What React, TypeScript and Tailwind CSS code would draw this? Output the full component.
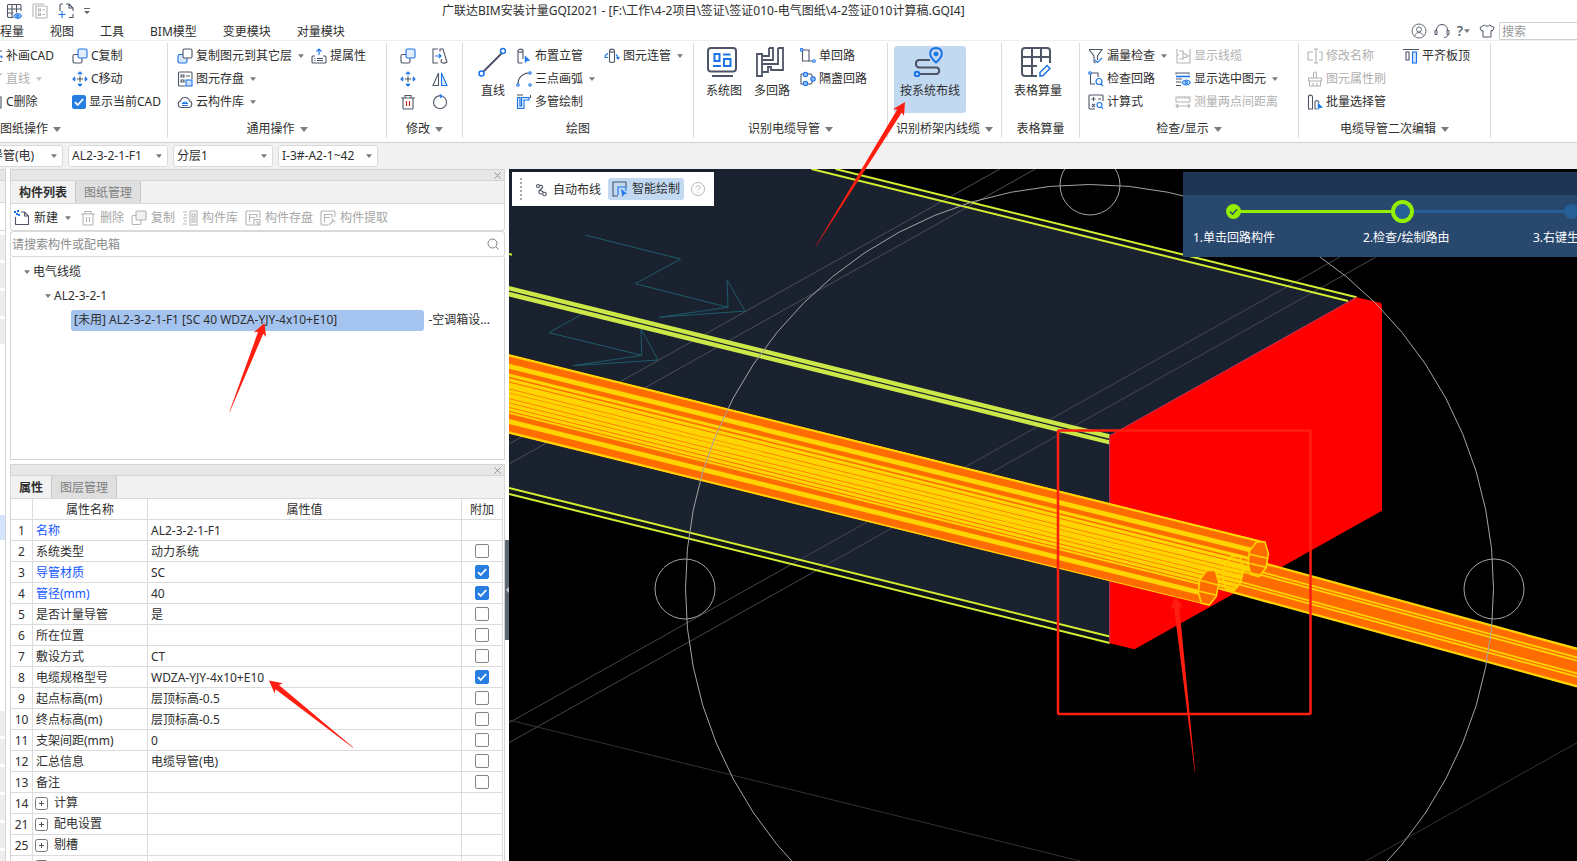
import { useState, type ReactNode } from "react";

const D = "#4d5566";
const B = "#1a73e8";
const G = "#b4b4b4";

/* ---------- small icons, drawn in a 16 x 16 box ---------- */

const moveIcon = (
  <>
    <path d="M8 5v6M5 8h6" stroke={D} />
    <path d="M8 4V1M6 3l2-2 2 2M8 12v3M6 13l2 2 2-2M4 8H1M3 6L1 8l2 2M12 8h3M13 6l2 2-2 2" stroke={B} />
  </>
);

const ICONS: Record<string, ReactNode> = {
  copy: (
    <>
      <rect x="1" y="6.5" width="9" height="8.5" rx="1.5" stroke={D} fill="#fff" />
      <rect x="6" y="1" width="9" height="9" rx="1.5" stroke={B} fill="#e3eefd" />
    </>
  ),
  copyLayer: (
    <>
      <rect x="1" y="6.5" width="9" height="8.5" rx="1.5" stroke={B} fill="#d3e4fb" />
      <rect x="6" y="1" width="9" height="9" rx="1.5" stroke={D} fill="#fff" />
    </>
  ),
  copyGray: (
    <>
      <rect x="1" y="5.5" width="9" height="9" rx="1.5" stroke={G} />
      <rect x="5" y="1" width="10" height="9" rx="1" stroke={G} fill="#f1f1f1" />
    </>
  ),
  move: moveIcon,
  patch: (
    <>
      <path d="M10 3h5M15 13.500h-5" stroke={D} />
      <path d="M11 10c4-4 5-1 3 0" stroke={B} />
    </>
  ),
  lineGray: <path d="M3 14L14 3h1" stroke={G} />,
  erase: <path d="M3 3h11v11H5" stroke={D} />,
  diskSave: (
    <>
      <path d="M8 15H2.500a1 1 0 0 1-1-1V2a1 1 0 0 1 1-1H14a1 1 0 0 1 1 1v6" stroke={D} />
      <path d="M4 4h3v2H4zM4 9h3v2H4zM9 5h4" stroke={D} />
      <rect x="9" y="9" width="6" height="6" stroke={B} fill="#cfe1fa" />
    </>
  ),
  cloud: (
    <>
      <path d="M4 13.500a3.300 3.300 0 0 1-.5-6.400 4.600 4.600 0 0 1 9 0 3.300 3.300 0 0 1-.5 6.400z" stroke={D} />
      <path d="M5 11.500h6M5.500 9.500c1-2 4-2 5 0z" stroke={B} />
    </>
  ),
  attr: (
    <>
      <path d="M4 8H2a1 1 0 0 0-1 1v5a1 1 0 0 0 1 1h12a1 1 0 0 0 1-1V9a1 1 0 0 0-1-1h-2M3.500 10.500h1M6 10.500h6M3.500 12.500h1M6 12.500h6" stroke={D} />
      <path d="M8 7V1M5.500 3.500L8 1l2.500 2.500" stroke={B} />
    </>
  ),
  stretch: (
    <>
      <path d="M6 1H1v14h5M8 3.500V1h3l4 13c-2 1.500-5 1.500-6 0l.5-3" stroke={D} />
      <path d="M3 8h6M7 6l2 2-2 2" stroke={B} />
    </>
  ),
  mirror: (
    <>
      <path d="M6.500 2v12.500H1z" stroke={D} />
      <path d="M9.500 2v12.500H15z" stroke={B} fill="#dbe9fd" />
    </>
  ),
  trash: (
    <>
      <path d="M1 4h14M3 4v10a1 1 0 0 0 1 1h8a1 1 0 0 0 1-1V4M5 4V1.500h6V4" stroke={D} />
      <path d="M6.500 7v5M9.500 7v5" stroke="#e02020" />
    </>
  ),
  trashGray: <path d="M1 4h14M3 4v10a1 1 0 0 0 1 1h8a1 1 0 0 0 1-1V4M5 4V1.500h6V4M6.500 7v5M9.500 7v5" stroke={G} />,
  rotate: (
    <>
      <path d="M10.500 2.200a6.500 6.500 0 1 1-4-.3L9 1.800" stroke={D} />
      <path d="M8 .5l2.500 1.500L8.500 4z" fill={B} stroke={B} strokeWidth="0.800" />
    </>
  ),
  riser: (
    <>
      <path d="M2 3v11a1 1 0 0 0 1 1h3.500M2 3c0-2.500 5-2.500 5 0v8M2 3c0 1.500 5 1.500 5 0" stroke={D} />
      <path d="M9 8l5 4.500-3 .2-2 2z" fill={B} stroke={B} strokeWidth="0.500" />
    </>
  ),
  arc: (
    <>
      <path d="M2 13C2 7 6 2.500 12.500 2" stroke={D} />
      <circle cx="2" cy="14" r="1.200" stroke={B} />
      <circle cx="14" cy="2" r="1.200" stroke={B} />
      <circle cx="14" cy="14" r="1.200" stroke={B} />
    </>
  ),
  multi: (
    <>
      <path d="M1 1h6M14.500 1v3" stroke={D} />
      <path d="M1.500 3.500v11H8V6h5V3.500H5.500V12H4V3.500z" stroke={B} fill="#dbe9fd" />
    </>
  ),
  link: (
    <>
      <path d="M5.500 3v10c0 2 5 2 5 0V3c0-2.500-5-2.500-5 0zM5.500 3c0 1.500 5 1.500 5 0" stroke={D} />
      <path d="M4 5.500C2 6 1 8 1 9.500h3M12 6.500c1.500 1 2 2.500 2 4M12.500 9l1.500 2 1.500-2" stroke={B} />
    </>
  ),
  single: (
    <>
      <path d="M3 2h6v11h4" stroke={D} />
      <path d="M2.500 3v10H9" stroke={D} />
      <circle cx="1.500" cy="1.800" r="1.300" stroke={B} fill="#fff" />
      <circle cx="14" cy="13" r="1.300" stroke={B} fill="#fff" />
    </>
  ),
  skip: (
    <>
      <path d="M1 3v10h3M1 3h3M7 3h4l3 5-3 5H6" stroke={D} />
      <circle cx="5.500" cy="3.500" r="2.200" stroke={B} fill="#8fbcf5" />
      <circle cx="5.500" cy="12.500" r="2.200" stroke={B} fill="#8fbcf5" />
      <circle cx="13" cy="8" r="2.200" stroke={B} fill="#8fbcf5" />
    </>
  ),
  funnel: (
    <>
      <path d="M1 1.500h13L9.500 8v4M1 1.500L6 8v6l1.500 1" stroke={D} />
      <path d="M7 12l2.500 2.500L14 10" stroke={B} />
    </>
  ),
  checkLoop: (
    <>
      <path d="M2 2h8v4M2.500 3v10H7" stroke={D} />
      <circle cx="2" cy="2" r="1.300" stroke={B} fill="#fff" />
      <circle cx="11" cy="10.500" r="3" stroke={B} />
      <path d="M13 13l2 2" stroke={B} />
    </>
  ),
  formula: (
    <>
      <path d="M7 15H2a1 1 0 0 1-1-1V2a1 1 0 0 1 1-1h12a1 1 0 0 1 1 1v5M3.500 5h4M5.500 3v4M10 5h3M4 10l3 3M7 10l-3 3" stroke={D} />
      <circle cx="11.500" cy="11" r="2.500" stroke={B} />
      <path d="M13.500 13l1.500 2" stroke={B} />
    </>
  ),
  cableGray: <path d="M2 1v14h13V1M4 3h4v8H4M8 5l4 2v2l-4 1M12 8h3M2 7h2" stroke={G} />,
  showSel: (
    <>
      <path d="M1 3.500V2h13v1.500M1 8h6M1 11h5M1 14.500h5" stroke={D} />
      <path d="M1 5.500h14" stroke={B} strokeWidth="1.600" />
      <path d="M7 11.500c2-3.300 6.500-3.300 8.500 0-2 3.300-6.500 3.300-8.500 0z" stroke={B} fill="#dbe9fd" />
      <circle cx="11.200" cy="11.500" r="1.200" stroke={B} />
    </>
  ),
  ruler: <path d="M1 3h14v5H1zM4 3v2M7 3v2M10 3v2M13 3v2M1 12h14M3 10l-2 2 2 2M13 10l2 2-2 2" stroke={G} />,
  rename: <path d="M6 4H1v8h5M12 4h3v8h-3M9 1v14M7 1h4M7 15h4" stroke={G} />,
  brush: <path d="M6.500 7V2.500a1.500 1.500 0 0 1 3 0V7M1.500 7h13v3h-13zM2.500 10v5h11v-5M6 12v3M10 12v3" stroke={G} />,
  batch: (
    <>
      <path d="M1.500 3v12h4V3c0-2.500-4-2.500-4 0zM8 15V8c0-2 4-2 4 1M8 15h2" stroke={D} />
      <path d="M11 9l4.500 4.500-2.800.2L11 15.500z" fill={B} stroke={B} strokeWidth="0.500" />
    </>
  ),
  alignTop: (
    <>
      <path d="M0 1.500h16M3 4h3v8H3z" stroke={D} />
      <rect x="9.500" y="4" width="4" height="11" stroke={B} fill="#cfe1fa" />
    </>
  ),
  newDoc: (
    <>
      <path d="M1.500 7v7.500h13V6l-4-4H7M10.500 2v4h4" stroke={D} />
      <path d="M0 1h2v2H0zM3 0h2v2H3zM2 3h2v2H2zM4 4h2v2H4z" fill={B} stroke="none" />
    </>
  ),
  library: <path d="M8 1h7v14H8V1M10 4h3v3h-3zM10 9h3v3h-3zM1 2h4M1 8h4M1 14h4M2 5h3M2 11h3" stroke={G} />,
  store: (
    <>
      <path d="M8 15H2a1 1 0 0 1-1-1V2a1 1 0 0 1 1-1h12a1 1 0 0 1 1 1v6M4.500 12V4.500H12v3M4.500 7.500H10" stroke={G} />
      <path d="M9 9.500h6V15H9zM11 12h2v3" stroke={G} />
    </>
  ),
  extract: <path d="M8 15H2a1 1 0 0 1-1-1V2a1 1 0 0 1 1-1h12a1 1 0 0 1 1 1v5M4.500 12V4.500H12v3M4.500 7.500H10M9 15l4-4M12 9l3 3" stroke={G} />,
  gridEye: (
    <>
      <path d="M7.500 14.500H2.500a1.500 1.500 0 0 1-1-1.500V2.500a1.500 1.500 0 0 1 1-1h11.500a1 1 0 0 1 1 1V8M1.500 6h13.500M1.500 10h6M6 1.500v13M10.500 1.500v8" stroke={D} />
      <path d="M8 13c2-3.200 5.500-3.200 7.500 0-2 3.200-5.500 3.200-7.500 0z" stroke={B} fill="#dbe9fd" />
      <circle cx="11.700" cy="13" r="1" stroke={B} />
    </>
  ),
  listGray: <path d="M12 1H2a1 1 0 0 0-1 1v12M4 3h10a1 1 0 0 1 1 1v10a1 1 0 0 1-1 1H4zM6.500 6h2v2h-2zM6.500 10.500h2v2h-2zM10.500 7H13M10.500 11.500H13" stroke={G} />,
  addFrame: (
    <>
      <path d="M2 8V2a1 1 0 0 1 1-1h2M8 1h3l4 4v3M15 11v3.500h-4M11 1v4h4" stroke={D} />
      <path d="M4 8v7M0.500 11.500h7" stroke={B} />
    </>
  ),
  autoWire: (
    <>
      <circle cx="5" cy="4" r="1.500" stroke={D} />
      <circle cx="11.500" cy="12" r="1.800" stroke={D} />
      <path d="M6.500 3.500c3-.5 4 1 2.500 2.500L6.500 8.500C5 10 6 12.500 9.500 12M7 8l3.500 2" stroke={D} />
    </>
  ),
  smartDraw: (
    <>
      <path d="M14 6V1H1v14h5" stroke={D} />
      <path d="M6 14V6h8v4" stroke={B} />
      <path d="M9.500 8.500l5 4-2.500.5-1.500 2.500z" fill={B} stroke={B} strokeWidth="0.500" />
    </>
  ),
};

function Icon({ name }: { name: string }) {
  return (
    <svg viewBox="0 0 16 16" className="size-4 shrink-0" fill="none" strokeWidth="1.100" aria-hidden="true">
      {ICONS[name]}
    </svg>
  );
}

function Caret({ muted = false, big = false }: { muted?: boolean; big?: boolean }) {
  return (
    <svg viewBox="0 0 8 5" className={big ? "h-[5px] w-2 shrink-0" : "h-1 w-[6px] shrink-0"} aria-hidden="true">
      <path d="M0 0h8L4 5z" fill={muted ? "#c4c4c4" : "#7b7b7b"} />
    </svg>
  );
}

function Check({ label, defaultChecked = false, text }: { label: string; defaultChecked?: boolean; text?: string }) {
  const [on, setOn] = useState(defaultChecked);
  return (
    <label className="inline-flex items-center gap-[3px]">
      <span className="grid size-[14px]">
        <input
          type="checkbox"
          checked={on}
          onChange={(e) => setOn(e.target.checked)}
          aria-label={label}
          className="peer col-start-1 row-start-1 size-[14px] appearance-none rounded-[2px] border border-[#858585] bg-white checked:border-[#287de1] checked:bg-[#287de1]"
        />
        <svg viewBox="0 0 14 14" className="pointer-events-none invisible col-start-1 row-start-1 size-[14px] peer-checked:visible" aria-hidden="true">
          <path d="M3 7.200l2.700 2.800L11.200 4" fill="none" stroke="#fff" strokeWidth="1.800" />
        </svg>
      </span>
      {text}
    </label>
  );
}

/* ---------- ribbon ---------- */

function Tool({ icon, text, caret, off }: { icon: string; text?: string; caret?: boolean; off?: boolean }) {
  return (
    <button
      type="button"
      aria-label={text ?? icon}
      className={
        off
          ? "flex h-[23px] items-center gap-[3px] whitespace-nowrap text-[#b0b0b0]"
          : "flex h-[23px] items-center gap-[3px] whitespace-nowrap"
      }
    >
      <Icon name={icon} />
      {text}
      {caret && (
        <span className="ml-[3px] flex">
          <Caret muted={off} />
        </span>
      )}
    </button>
  );
}

function BigTool({ text, active, children }: { text: string; active?: boolean; children: ReactNode }) {
  return (
    <button
      type="button"
      className={
        active
          ? "mt-[2px] flex h-[67px] flex-col items-center gap-[6px] rounded-[3px] bg-[#c2d9f2] px-[6px] pt-px whitespace-nowrap"
          : "mt-[2px] flex h-[67px] flex-col items-center gap-[6px] pt-px whitespace-nowrap"
      }
    >
      <svg viewBox="0 0 30 30" className="mr-1 size-[30px]" fill="none" strokeWidth="2" stroke={D} aria-hidden="true">
        {children}
      </svg>
      {text}
    </button>
  );
}

function Group({ width, label, caret, start, children }: { width: string; label: string; caret?: boolean; start?: boolean; children: ReactNode }) {
  return (
    <section className={`flex h-[95px] shrink-0 flex-col justify-between border-r border-[#dcdcdc] pt-px ${width}`}>
      <div className="flex">{children}</div>
      <div className={start ? "flex h-[18px] items-center gap-[5px]" : "flex h-[18px] items-center justify-center gap-[5px]"}>
        {label}
        {caret && <Caret big />}
      </div>
    </section>
  );
}

function Ribbon() {
  return (
    <div className="flex h-[102px] shrink-0 overflow-hidden border-b border-[#d0d0d0] bg-white pt-[2px]">
      <Group width="w-[168px]" label="图纸操作" caret start>
        <div className="-ml-[13px] w-[85px]">
          <Tool icon="patch" text="补画CAD" />
          <Tool icon="lineGray" text="直线" caret off />
          <Tool icon="erase" text="C删除" />
        </div>
        <div>
          <Tool icon="copy" text="C复制" />
          <Tool icon="move" text="C移动" />
          <div className="flex h-[23px] items-center whitespace-nowrap">
            <Check label="显示当前CAD" text="显示当前CAD" defaultChecked />
          </div>
        </div>
      </Group>
      <Group width="w-[219px]" label="通用操作" caret>
        <div className="ml-[9px] w-[134px]">
          <Tool icon="copyLayer" text="复制图元到其它层" caret />
          <Tool icon="diskSave" text="图元存盘" caret />
          <Tool icon="cloud" text="云构件库" caret />
        </div>
        <div>
          <Tool icon="attr" text="提属性" />
        </div>
      </Group>
      <Group width="w-[76px]" label="修改" caret>
        <div className="ml-[13px] w-8">
          <Tool icon="copy" />
          <Tool icon="move" />
          <Tool icon="trash" />
        </div>
        <div>
          <Tool icon="stretch" />
          <Tool icon="mirror" />
          <Tool icon="rotate" />
        </div>
      </Group>
      <Group width="w-[231px]" label="绘图">
        <div className="ml-[13px] w-10">
          <BigTool text="直线">
            <path d="M6 26L27 5" />
            <circle cx="5.500" cy="26.500" r="2.500" stroke={B} strokeWidth="1.500" fill="#fff" />
            <circle cx="27" cy="4" r="2.500" stroke={B} strokeWidth="1.500" fill="#fff" />
          </BigTool>
        </div>
        <div className="w-[88px]">
          <Tool icon="riser" text="布置立管" />
          <Tool icon="arc" text="三点画弧" caret />
          <Tool icon="multi" text="多管绘制" />
        </div>
        <div>
          <Tool icon="link" text="图元连管" caret />
        </div>
      </Group>
      <Group width="w-[194px]" label="识别电缆导管" caret>
        <div className="ml-3 flex w-[94px] gap-3">
          <BigTool text="系统图">
            <rect x="1" y="1" width="28" height="23.500" rx="3" />
            <path d="M5 29h21" />
            <path d="M7.500 7h5v7h-5zM16 7.500h7.500M17 12h6.500v7H17zM6 19h8" stroke={B} />
          </BigTool>
          <BigTool text="多回路">
            <path strokeWidth="1.800" d="M2 7h5v22H2zM14 1h4v12H7M7 9h7V1M23 1v16H7M23 1h5v22H16v-3h-3v5H7" />
          </BigTool>
        </div>
        <div>
          <Tool icon="single" text="单回路" />
          <Tool icon="skip" text="隔盏回路" />
        </div>
      </Group>
      <Group width="w-[114px]" label="识别桥架内线缆" caret>
        <div className="ml-[6px]">
          <BigTool text="按系统布线" active>
            <path d="M17 13H5.500a4 4 0 0 0 0 7.500H24a3.500 3.500 0 0 1 0 6.500H6" />
            <path d="M23 15.500c-8.500-7-7-14 0-14.500 7 .5 8.500 7.500 0 14.500z" stroke={B} />
            <circle cx="23" cy="7" r="2" stroke={B} fill="#1a73e8" strokeWidth="1" />
            <circle cx="4" cy="27" r="2.300" stroke={B} fill="#c2d9f2" />
          </BigTool>
        </div>
      </Group>
      <Group width="w-[78px]" label="表格算量">
        <div className="ml-3">
          <BigTool text="表格算量">
            <path d="M16 29H4a3 3 0 0 1-3-3V4a3 3 0 0 1 3-3h22a3 3 0 0 1 3 3v12M1 10h28M1 19h15M11 1v28M20 1v14" />
            <path d="M19 29v-3.500l7-7 3 3-7 7z" stroke={B} strokeWidth="1.500" />
          </BigTool>
        </div>
      </Group>
      <Group width="w-[219px]" label="检查/显示" caret>
        <div className="ml-2 w-[87px]">
          <Tool icon="funnel" text="漏量检查" caret />
          <Tool icon="checkLoop" text="检查回路" />
          <Tool icon="formula" text="计算式" />
        </div>
        <div>
          <Tool icon="cableGray" text="显示线缆" off />
          <Tool icon="showSel" text="显示选中图元" caret />
          <Tool icon="ruler" text="测量两点间距离" off />
        </div>
      </Group>
      <Group width="w-[192px]" label="电缆导管二次编辑" caret>
        <div className="ml-2 w-24">
          <Tool icon="rename" text="修改名称" off />
          <Tool icon="brush" text="图元属性刷" off />
          <Tool icon="batch" text="批量选择管" />
        </div>
        <div>
          <Tool icon="alignTop" text="平齐板顶" />
        </div>
      </Group>
    </div>
  );
}

function Header() {
  return (
    <header className="shrink-0 bg-white">
      <div className="flex h-[21px] items-center overflow-hidden whitespace-nowrap">
        <div className="flex w-[442px] shrink-0 items-center gap-[10px] pl-[6px]">
          <button type="button" aria-label="表格预览"><Icon name="gridEye" /></button>
          <button type="button" aria-label="列表"><Icon name="listGray" /></button>
          <button type="button" aria-label="新增图框"><Icon name="addFrame" /></button>
          <button type="button" aria-label="更多">
            <svg viewBox="0 0 6 6" className="size-[6px]"><path d="M0 0h6v1H0zM0 3h6L3 6z" fill="#666" /></svg>
          </button>
        </div>
        <h1>广联达BIM安装计量GQI2021 - [F:\工作\4-2项目\签证\签证010-电气图纸\4-2签证010计算稿.GQI4]</h1>
      </div>
      <div className="flex h-5 items-center border-b border-[#efefef]">
        <nav className="-ml-3 flex gap-[26px] pt-[2px] whitespace-nowrap">
          {["工程量", "视图", "工具", "BIM模型", "变更模块", "对量模块"].map((t) => (
            <button type="button" key={t}>{t}</button>
          ))}
        </nav>
        <div className="ml-auto flex items-center">
          <button type="button" aria-label="用户" className="mr-[7px]">
            <svg viewBox="0 0 16 16" className="size-4" fill="none" stroke="#666c78">
              <circle cx="8" cy="8" r="7" /><circle cx="8" cy="6.500" r="2.500" /><path d="M4 12.500c1-4 7-4 8 0" />
            </svg>
          </button>
          <button type="button" aria-label="客服" className="mr-[7px]">
            <svg viewBox="0 0 16 16" className="size-4" fill="none" stroke={D}>
              <path d="M2.500 7a5.500 5.500 0 0 1 11 0M1 7.500h2v4H1zM13 7.500h2v4h-2zM14 11.500c0 2-2 3-4 3" />
            </svg>
          </button>
          <button type="button" aria-label="帮助" className="mr-[9px] flex items-center gap-px text-sm leading-4 font-medium text-[#4d5566]">
            ?<Caret />
          </button>
          <button type="button" aria-label="皮肤" className="mr-1">
            <svg viewBox="0 0 16 16" className="size-4" fill="none" stroke={D}>
              <path d="M5.500 2L1 4.500 2.500 8l1.500-.5V14h8V7.500l1.500.5L15 4.500 10.500 2c-1 1.500-4 1.500-5 0z" />
            </svg>
          </button>
          <input
            type="text"
            aria-label="搜索"
            placeholder="搜索"
            className="h-[18px] w-[78px] rounded-l-[2px] border border-r-0 border-[#d0d0d0] pt-px pl-[2px] outline-none placeholder:text-[#999]"
          />
        </div>
      </div>
    </header>
  );
}

function Combo({ label, value, className = "" }: { label: string; value: string; className?: string }) {
  return (
    <label className={`relative flex h-[22px] w-[100px] shrink-0 items-center rounded-[3px] border border-[#dadada] bg-white ${className}`}>
      <select aria-label={label} defaultValue={value} className="w-full appearance-none bg-transparent pl-[3px] text-xs outline-none">
        <option>{value}</option>
      </select>
      <span className="pointer-events-none absolute top-2 right-[5px] flex"><Caret /></span>
    </label>
  );
}

/* ---------- left panels ---------- */

function PanelTitle() {
  return (
    <div className="flex h-3 shrink-0 items-center justify-end border border-[#d4d4d4] bg-[#e7e7e7] pr-[3px]">
      <button type="button" aria-label="关闭">
        <svg viewBox="0 0 7 7" className="size-[7px]"><path d="M.5.5l6 6M6.500.5l-6 6" stroke="#909090" fill="none" /></svg>
      </button>
    </div>
  );
}

function Tabs({ active, other }: { active: string; other: string }) {
  return (
    <div className="flex h-[23px] shrink-0 border-x border-b border-[#d9d9d9] bg-[#f1f1f1]">
      <button type="button" className="border-r border-[#c6c6c6] px-2 pt-[2px] font-bold">{active}</button>
      <button type="button" className="border-r border-[#c6c6c6] bg-[#dfdfdf] px-2 pt-[2px] text-[#808080]">{other}</button>
    </div>
  );
}

function PanelTool({ icon, text }: { icon: string; text: string }) {
  return (
    <button type="button" className="flex items-center gap-1 text-[#a6a6a6]">
      <Icon name={icon} />
      {text}
    </button>
  );
}

function ComponentPanel() {
  return (
    <section className="flex shrink-0 flex-col">
      <PanelTitle />
      <Tabs active="构件列表" other="图纸管理" />
      <div className="flex h-[27px] items-center gap-[7px] rounded-b-[3px] border border-t-0 border-[#d9d9d9] pt-[2px] pl-[3px] whitespace-nowrap">
        <button type="button" className="mr-[2px] flex items-center gap-1">
          <Icon name="newDoc" />
          新建
          <span className="ml-[3px] flex"><Caret /></span>
        </button>
        <PanelTool icon="trashGray" text="删除" />
        <PanelTool icon="copyGray" text="复制" />
        <PanelTool icon="library" text="构件库" />
        <PanelTool icon="store" text="构件存盘" />
        <PanelTool icon="extract" text="构件提取" />
      </div>
      <label className="flex h-[26px] items-center rounded-[3px] border border-[#d9d9d9] pr-[5px] pl-px">
        <input type="text" aria-label="搜索构件" placeholder="请搜索构件或配电箱" className="min-w-0 flex-1 pt-[2px] outline-none placeholder:text-[#8c8c8c]" />
        <svg viewBox="0 0 12 12" className="size-3" fill="none" stroke="#7d7d7d"><circle cx="5.500" cy="5.500" r="4.500" /><path d="M9 9l2.500 2.500" /></svg>
      </label>
      <ul className="h-[203px] border border-t-0 border-[#d4d4d4] pt-[3px] whitespace-nowrap">
        <li className="flex h-6 items-center gap-[3px] pl-[13px]"><Caret />电气线缆</li>
        <li className="flex h-6 items-center gap-[3px] pl-[34px]"><Caret />AL2-3-2-1</li>
        <li className="flex h-6 items-center gap-1 pr-[14px] pl-[60px]">
          <span className="h-[21px] flex-1 rounded-[3px] bg-[#a4c3ee] pl-[3px] leading-5">[未用] AL2-3-2-1-F1 [SC 40 WDZA-YJY-4x10+E10]</span>
          <span>-空调箱设...</span>
        </li>
      </ul>
    </section>
  );
}

type Row = { n: string; name: string; value?: string; blue?: boolean; check?: boolean; group?: boolean };

const ROWS: Row[] = [
  { n: "1", name: "名称", value: "AL2-3-2-1-F1", blue: true },
  { n: "2", name: "系统类型", value: "动力系统", check: false },
  { n: "3", name: "导管材质", value: "SC", blue: true, check: true },
  { n: "4", name: "管径(mm)", value: "40", blue: true, check: true },
  { n: "5", name: "是否计量导管", value: "是", check: false },
  { n: "6", name: "所在位置", check: false },
  { n: "7", name: "敷设方式", value: "CT", check: false },
  { n: "8", name: "电缆规格型号", value: "WDZA-YJY-4x10+E10", check: true },
  { n: "9", name: "起点标高(m)", value: "层顶标高-0.5", check: false },
  { n: "10", name: "终点标高(m)", value: "层顶标高-0.5", check: false },
  { n: "11", name: "支架间距(mm)", value: "0", check: false },
  { n: "12", name: "汇总信息", value: "电缆导管(电)", check: false },
  { n: "13", name: "备注", check: false },
  { n: "14", name: "计算", group: true },
  { n: "21", name: "配电设置", group: true },
  { n: "25", name: "剔槽", group: true },
  { n: "", name: "", group: true },
];

function PropertyPanel() {
  const base = "h-[21px] border-r border-b border-[#dcdcdc] p-0 font-normal";
  const cell = `${base} pt-[2px]`;
  return (
    <section className="mt-1 flex min-h-0 flex-1 flex-col overflow-hidden">
      <PanelTitle />
      <Tabs active="属性" other="图层管理" />
      <div className="min-h-0 flex-1 overflow-hidden border-x border-[#d4d4d4] pr-px">
        <table className="w-full table-fixed border-separate border-spacing-0 whitespace-nowrap">
          <colgroup>
            <col className="w-[22px]" />
            <col className="w-[115px]" />
            <col />
            <col className="w-[41px]" />
          </colgroup>
          <thead>
            <tr>
              <th className={cell}></th>
              <th className={cell}>属性名称</th>
              <th className={cell}>属性值</th>
              <th className={cell}>附加</th>
            </tr>
          </thead>
          <tbody>
            {ROWS.map((r) => (
              <tr key={r.n + r.name}>
                <td className={`${cell} text-center`}>{r.n}</td>
                <td className={r.blue ? `${cell} text-[#1558ff]` : r.group ? base : cell}>
                  <div className="flex items-center pl-[3px]">
                    {r.group && (
                      <button type="button" aria-label={`展开${r.name}`} className="mr-[6px] -ml-px">
                        <svg viewBox="0 0 13 13" className="size-[13px]" fill="none" stroke="#777">
                          <rect x=".5" y=".5" width="12" height="12" rx="2" />
                          <path d="M4 6.500h5M6.500 4v5" stroke="#555" />
                        </svg>
                      </button>
                    )}
                    {r.name}
                  </div>
                </td>
                <td className={`${cell} overflow-hidden`}><span className="pl-[3px]">{r.value}</span></td>
                <td className={base}>
                  {r.check !== undefined && (
                    <div className="flex justify-center"><Check label={`附加 ${r.name}`} defaultChecked={r.check} /></div>
                  )}
                </td>
              </tr>
            ))}
          </tbody>
        </table>
      </div>
    </section>
  );
}

function SideStrip() {
  return (
    <aside className="flex w-[6px] shrink-0 flex-col overflow-hidden border-r border-[#d4d4d4]">
      <div className="h-3 shrink-0 border-y border-[#d4d4d4] bg-[#e7e7e7]" />
      <div className="h-[22px] shrink-0 border-b border-[#d9d9d9] bg-[#f1f1f1]" />
      <div className="mb-1 h-7 shrink-0 border-b border-[#d9d9d9]" />
      <div className="flex shrink-0 flex-col gap-[3px]">
        {[0, 1, 2, 3].map((i) => <div key={i} className="h-[25px] bg-[#ededed]" />)}
      </div>
      <div className="mt-[171px] mb-[171px] h-[25px] shrink-0 bg-[#d3e5fd]" />
      <div className="flex flex-col gap-[3px]">
        {[0, 1, 2, 3, 4, 5].map((i) => <div key={i} className="h-[25px] shrink-0 bg-[#ededed]" />)}
      </div>
    </aside>
  );
}

/* ---------- 3D view ---------- */

const LIME = "#d4ee34";
const YEL = "#ffd400";
const ORG = "#ff6d00";

/* [offset from the bundle's top edge, thickness] */
const BUNDLE: [number, number][] = [
  [0, 2.4], [9.7, 5], [19.5, 3.2], [24.3, 3.2], [28.5, 6], [35.2, 3.6], [39.3, 5], [45, 3.6], [49.3, 3.6], [53.8, 3], [57.8, 2], [65, 5], [77.3, 2.4],
];

const CAP: [number, number][] = [[-2, -17], [6.5, -17], [10, -5], [7.5, 9], [0.5, 17.5], [-7.5, 15.5], [-10.5, 5], [-9, -8]];

function ringPoints(cx: number, cy: number, r: number, n: number) {
  return Array.from({ length: n }, (_, i) => {
    const a = (i / n) * Math.PI * 2;
    return `${(cx + r * Math.cos(a)).toFixed(1)},${(cy + r * Math.sin(a)).toFixed(1)}`;
  }).join(" ");
}

function capPoints(cx: number, cy: number) {
  return CAP.map(([x, y]) => `${cx + x},${cy + y}`).join(" ");
}

function Scene() {
  return (
    <svg viewBox="509 169 1068 692" preserveAspectRatio="xMinYMin slice" className="absolute inset-0 size-full" fill="none" aria-label="三维视图">
      <defs>
        <clipPath id="bundle">
          <path d="M509 354L1265 541.500 1268.700 554 1266 568 1259 577 1244 573 1240.500 583 1233.500 591 1219 587 1216 597 1209 605.500 509 434z" />
        </clipPath>
      </defs>
      <rect x="509" y="169" width="1068" height="692" fill="#000" />
      <path d="M509 169H835.600L1356.600 297.300 1109.700 435.700V643L509 494z" fill="#1b222f" />
      <path d="M811.500 169H835.600L1356.600 297.300 1348 301z" fill="#10151a" />
      <path d="M509 488L1109.700 637V643L509 494z" fill="#10151a" />

      <g stroke="#4b4f58">
        <path d="M999.800 169L509 444M1035.300 169L509 464" />
        <path d="M1340 257L509 722.700M1375.500 257.300L509 742.700" stroke="#44474d" />
        <path d="M509 720L1080 861M1577 742.700L1366 861" stroke="#333" />
      </g>
      <g stroke="#1d5b6a">
        <path d="M584.900 235L680.600 259 635.200 283.700 728 307.300 727 280 745 311 659.300 317.300 728 307.300" />
        <path d="M583.500 313.300L549 332.700 641.700 355.300 641 329 658 360 573.200 365.700 641.700 355.300" />
      </g>

      <g stroke={LIME} strokeWidth="2">
        <path d="M835.600 169L1356.600 297.300M811.500 169L1348 301M509 488L1109.700 636.500M509 494L1109.700 643M509 254l3 .7" />
      </g>
      <path d="M509 286L1109.700 434.300V444.500L509 296.500z" fill="#cce748" />
      <path d="M509 291.200L1109.700 439.500" stroke="#1b222f" strokeWidth="1.300" />

      <path d="M1356.600 297.300L1381 303 1382 306V510.700L1134.500 649.300 1109.700 643.300V435.700z" fill="#f00" />
      <path d="M1109.700 643V435.700L1356.600 297.300" stroke="#c4385a" />

      <path d="M1219 551L1577 648.500V687L1219 589z" fill={ORG} />
      <g stroke={YEL} strokeWidth="2.300">
        <path d="M1219 551L1577 648.800M1219 588.500L1577 686.300" />
        <g strokeWidth="1.700">
          <path d="M1219 560.500L1577 657.500M1219 563.500L1577 660.700M1219 576L1577 673.500M1219 579L1577 676.700" />
        </g>
      </g>

      <g clipPath="url(#bundle)">
        <path d="M509 354L1280 545V625L509 434z" fill={ORG} />
        {BUNDLE.map(([o, t]) => (
          <path key={o} d={`M509 ${354 + o}L1280 ${545 + o}v${t}L509 ${354 + o + t}z`} fill={YEL} />
        ))}
      </g>
      <g stroke={YEL} strokeWidth="1.600">
        <polygon points={capPoints(1258.5, 559)} fill={ORG} />
        <path d="M1249 554l19 4.500M1248 563l19 4.500M1251 573l11 2.500" />
        <polygon points={capPoints(1233.3, 573.5)} />
        <path d="M1224 567l22 5M1222 574l20 5M1226 584l12 3" />
        <polygon points={capPoints(1208.8, 587.5)} fill={ORG} />
        <path d="M1199 580l19 5M1198 591l18 4" />
      </g>

      <g stroke="#a3a3a3">
        <polygon points={ringPoints(1089.500, 588.500, 404, 64)} />
        <polygon points={ringPoints(685, 589, 30, 32)} />
        <polygon points={ringPoints(1090, 185, 30, 32)} />
        <polygon points={ringPoints(1494, 589, 30, 32)} />
      </g>
    </svg>
  );
}

function DrawBar() {
  return (
    <div className="absolute top-[3px] left-[3px] flex h-[34px] w-[202px] items-center bg-white pl-2 whitespace-nowrap">
      <span className="h-[22px] border-l-2 border-dotted border-[#a8a8a8]" />
      <button type="button" className="ml-[11px] flex items-center gap-1 pt-px">
        <Icon name="autoWire" />
        自动布线
      </button>
      <button type="button" className="ml-[7px] flex h-[22px] items-center gap-1 rounded-[3px] bg-[#c2d9f2] px-1">
        <Icon name="smartDraw" />
        智能绘制
      </button>
      <button type="button" aria-label="帮助" className="ml-[7px]">
        <svg viewBox="0 0 14 14" className="size-[14px]" fill="none" stroke="#b5b5b5">
          <circle cx="7" cy="7" r="6.500" />
          <path d="M5 5.500c0-2.500 4-2.500 4 0C9 7 7 7 7 8.500M7 9.800v1" />
        </svg>
      </button>
    </div>
  );
}

function Steps() {
  return (
    <div className="absolute top-[3px] right-0 w-[394px] overflow-hidden bg-[#29486e] text-white">
      <div className="h-[23px] bg-[#1f3556]" />
      <svg viewBox="0 0 394 33" className="h-[33px] w-[394px]" fill="none" aria-hidden="true">
        <path d="M219 16.500H394" stroke="#265f97" strokeWidth="3" />
        <path d="M50 16.500H219" stroke="#93ee00" strokeWidth="3" />
        <circle cx="50.500" cy="16.500" r="7.500" fill="#93ee00" />
        <path d="M47 16.500l2.500 2.700 4.500-5" stroke="#29486e" strokeWidth="1.300" />
        <circle cx="219.500" cy="16.500" r="9.500" fill="#265f97" stroke="#93ee00" strokeWidth="4" />
        <circle cx="388.500" cy="16.500" r="7.500" fill="#265f97" />
      </svg>
      <ol className="flex h-[29px] pl-[10px] leading-5 whitespace-nowrap">
        <li className="w-[170px] shrink-0">1.单击回路构件</li>
        <li className="w-[170px] shrink-0">2.检查/绘制路由</li>
        <li className="shrink-0">3.右键生成</li>
      </ol>
    </div>
  );
}

/* ---------- annotations laid over the whole window ---------- */

function arrowPath(tx: number, ty: number, ex: number, ey: number) {
  const len = Math.hypot(ex - tx, ey - ty);
  const ux = (ex - tx) / len;
  const uy = (ey - ty) / len;
  const at = (along: number, side: number) =>
    `${(tx + ux * along - uy * side).toFixed(1)} ${(ty + uy * along + ux * side).toFixed(1)}`;
  return `M${at(0, 0)}L${at(12.5, 6.5)}L${at(10.5, 2.7)}L${at(len, 0.2)}L${at(len, -0.2)}L${at(10.5, -2.7)}L${at(12.5, -6.5)}Z`;
}

function Annotations() {
  return (
    <svg viewBox="0 0 1577 861" className="pointer-events-none absolute top-0 left-0 h-[861px] w-[1577px]" fill="#ff1e10" aria-hidden="true">
      <path d={arrowPath(905, 102, 816, 246)} />
      <path d={arrowPath(264.5, 323, 229.5, 412)} />
      <path d={arrowPath(269, 680.5, 353, 747.5)} />
      <path d={arrowPath(1175.5, 596.5, 1195, 772)} />
      <rect x="1058" y="430.500" width="252.500" height="283.500" rx="1" fill="none" stroke="#ff1e10" strokeWidth="2.500" />
    </svg>
  );
}

export default function App() {
  return (
    <div className="relative flex h-screen flex-col overflow-hidden bg-white font-['Noto_Sans','Noto_Sans_CJK_SC',sans-serif] text-xs text-[#2e2e2e]">
      <Header />
      <Ribbon />
      <div className="flex h-[26px] shrink-0 items-center gap-[5px] overflow-hidden bg-[#f1f1f1]">
        <Combo label="构件类型" value="电缆导管(电)" className="-ml-[37px]" />
        <Combo label="构件" value="AL2-3-2-1-F1" />
        <Combo label="分层" value="分层1" />
        <Combo label="回路" value="I-3#-A2-1~42" />
      </div>
      <main className="flex min-h-0 flex-1">
        <SideStrip />
        <div className="ml-1 flex min-h-0 w-[495px] shrink-0 flex-col">
          <ComponentPanel />
          <PropertyPanel />
        </div>
        <div className="flex w-1 shrink-0 flex-col items-end pt-[371px]">
          <button type="button" aria-label="收起面板" className="flex h-[100px] w-1 items-center justify-end bg-[#5d6874]">
            <svg viewBox="0 0 3 6" className="h-[6px] w-[3px]"><path d="M3 0v6L0 3z" fill="#c6ccd2" /></svg>
          </button>
        </div>
        <div className="relative min-w-0 flex-1 overflow-hidden bg-black">
          <Scene />
          <DrawBar />
          <Steps />
        </div>
      </main>
      <Annotations />
    </div>
  );
}
